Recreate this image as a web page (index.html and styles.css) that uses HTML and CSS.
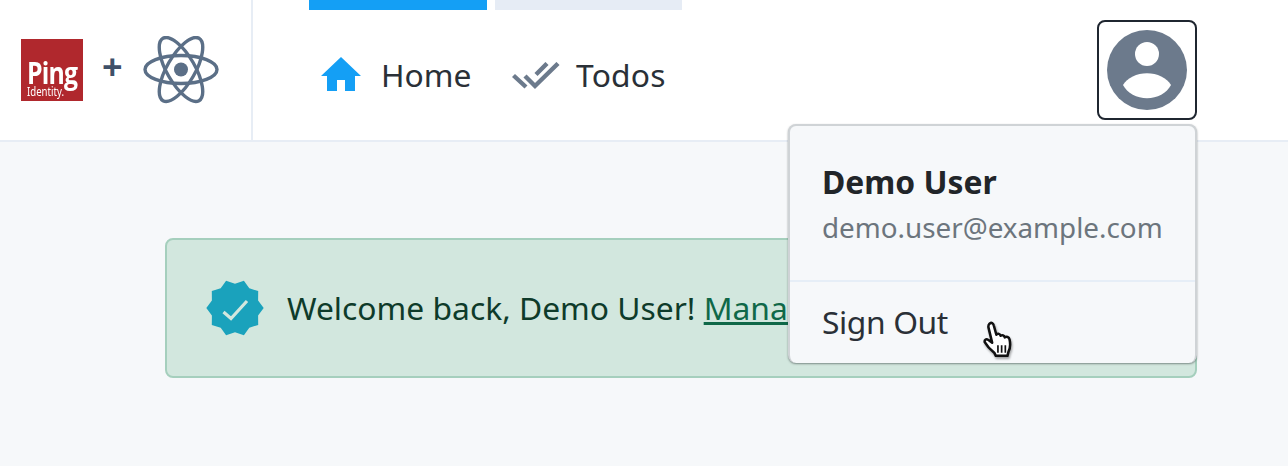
FILE: index.html
```html
<!DOCTYPE html>
<html lang="en">
<head>
<meta charset="utf-8">
<title>Todos</title>
<link rel="stylesheet" href="styles.css">
</head>
<body>
<header class="topbar">
  <div class="brand">
    <div class="ping"><span class="ping-name">Ping</span><span class="ping-sub">Identity.</span></div>
    <span class="plus">+</span>
    <svg class="react" viewBox="0 0 76 68" width="76" height="68">
      <g fill="none" stroke="#5b6f87" stroke-width="3.4">
        <ellipse cx="38" cy="33.5" rx="36" ry="14"/>
        <ellipse cx="38" cy="33.5" rx="36" ry="14" transform="rotate(60 38 33.5)"/>
        <ellipse cx="38" cy="33.5" rx="36" ry="14" transform="rotate(120 38 33.5)"/>
      </g>
      <circle cx="38" cy="33.5" r="7" fill="#5b6f87"/>
    </svg>
  </div>
  <nav class="nav">
    <div class="nav-item">
      <span class="tab tab-active tab-home"></span>
      <div class="link">
        <svg class="home-icon" viewBox="0 0 40 34" width="40" height="34"><path fill="#149ff5" d="M20 0 L40 19 H34 V34 H24 V23 H16 V34 H6 V19 H0 Z"/></svg>
        <span class="label">Home</span>
      </div>
    </div>
    <div class="nav-item">
      <span class="tab tab-todos"></span>
      <div class="link">
        <svg class="check-icon" viewBox="0 0 48 28" width="48" height="28"><path fill="none" stroke="#6c7a8c" stroke-width="4.4" d="M1.500 13.500L14 25M13 14L23 24L46 1.500M24 12.500L35 1.500"/></svg>
        <span class="label">Todos</span>
      </div>
    </div>
  </nav>
  <button class="avatar-btn" type="button" aria-label="Account">
    <svg viewBox="0 0 80 80" width="80" height="80">
      <circle cx="40" cy="40" r="40" fill="#6c7a8c"/>
      <circle cx="40" cy="24" r="12" fill="#fff"/>
      <path fill="#fff" d="M16 55C20 48 30 43.300 40 43.300C50 43.300 60 48 64 55C60 63 50 68.300 40 68.300C30 68.300 20 63 16 55Z"/>
    </svg>
  </button>
</header>
<main class="content">
  <div class="alert">
    <svg class="badge" viewBox="0 0 58 56" width="58" height="56">
      <path fill="#1aa2bc" d="M57.700 28L52.100 20.500L52.200 11.100L43.300 8.300L37.900 0.700L29 3.700L20.100 0.700L14.700 8.300L5.800 11.100L5.900 20.500L0.300 28L5.900 35.500L5.800 44.900L14.700 47.700L20.100 55.300L29 52.300L37.900 55.300L43.300 47.700L52.200 44.900L52.100 35.500Z"/>
      <path fill="none" stroke="#d3e7de" stroke-width="3.200" d="M17.500 32L25 38.500L41 21"/>
    </svg>
    <p class="alert-text">Welcome back, Demo User! <a href="#" class="alert-link">Manage your profile</a></p>
  </div>
</main>
<div class="menu">
  <div class="menu-head">
    <div class="menu-name">Demo User</div>
    <div class="menu-email">demo.user@example.com</div>
  </div>
  <div class="menu-item">Sign Out</div>
  <svg class="cursor" viewBox="0 0 32 36" width="34" height="38">
    <path fill="#fff" stroke="#111" stroke-width="2.400" stroke-linejoin="round" d="M7 2.500C9 1 10.500 2 11 4L13.500 13C15 11.500 17 12 17.500 14C19 13 21 13.500 21.500 15.500C23 14.500 25.500 15 26 17.500C27 22 26.500 26 25 29L24 33H13L11.500 30C9 28 5 24.500 2.500 20C2 18 3.500 16.500 6 18L9.500 20.500L6 6C5.800 4.500 6 3.500 7 2.500Z"/>
    <path stroke="#111" stroke-width="1.600" d="M15 23V30M18.500 23V30M22 23V30"/>
  </svg>
</div>
</body>
</html>
```
FILE: styles.css
```css
* { box-sizing: border-box; }
html, body { margin: 0; height: 100%; }
body {
  width: 1288px;
  height: 466px;
  overflow: hidden;
  background: #f6f8fa;
  font-family: "Noto Sans", "Open Sans", sans-serif;
  color: #2a3037;
  position: relative;
}
.topbar {
  height: 142px;
  background: #fff;
  border-bottom: 2px solid #e7edf5;
  display: flex;
}
.brand {
  width: 253px;
  border-right: 2px solid #e7edf5;
  display: flex;
  align-items: flex-start;
  padding: 39px 0 0 21px;
}
.ping {
  width: 62px;
  height: 62px;
  background: #b0282d;
  color: #fff;
  display: flex;
  flex-direction: column;
  padding: 19px 0 0 6px;
  line-height: 1;
  overflow: hidden;
}
.ping-name {
  font-family: "Open Sans", sans-serif;
  font-weight: 700;
  font-size: 31px;
  letter-spacing: -1px;
  line-height: 28px;
  transform: scaleX(0.8);
  transform-origin: left center;
  white-space: nowrap;
}
.ping-sub {
  font-size: 12px;
  line-height: 11px;
  transform: scaleX(0.8);
  transform-origin: left center;
  white-space: nowrap;
}
.plus {
  font-weight: 700;
  font-size: 36px;
  line-height: 44px;
  color: #3f5068;
  margin: 6px 0 0 19px;
}
.react { margin: -3px 0 0 20px; }
.nav {
  display: flex;
  margin-left: 56px;
  flex: 1;
  gap: 8px;
}
.nav-item { display: flex; flex-direction: column; }
.tab { display: block; height: 10px; }
.tab-home { width: 178px; background: #149ff5; }
.tab-todos { width: 187px; background: #e6ecf5; }
.link {
  display: flex;
  align-items: center;
  margin-top: 44px;
  height: 40px;
}
.home-icon { margin: 0 0 0 12px; }
.check-icon { margin: 4px 0 0 17px; }
.label { font-size: 31.800px; line-height: 40px; margin: 2px 0 0 20px; }
.check-icon + .label { margin-left: 16px; letter-spacing: 0.2px; }
.avatar-btn {
  width: 100px;
  height: 100px;
  margin: 20px 91px 0 0;
  padding: 0;
  background: #fff;
  border: 2px solid #1f2630;
  border-radius: 8px;
  display: flex;
  align-items: center;
  justify-content: center;
}
.content { padding: 96px 91px 0 165px; }
.alert {
  height: 140px;
  background: #d2e7de;
  border: 2px solid #a5cfbd;
  border-radius: 8px;
  display: flex;
  align-items: center;
  padding-left: 39px;
  color: #0e3b2a;
  overflow: hidden;
}
.alert-text { margin: 0 0 0 23px; font-size: 31.800px; line-height: 40px; white-space: nowrap; }
.alert-link { color: #0f6848; }
.menu {
  position: absolute;
  left: 788px;
  top: 124px;
  width: 409px;
  height: 239px;
  background: #f6f8fa;
  border: 2px solid #cfd3d6;
  border-bottom: 0;
  border-radius: 8px;
  box-shadow: 0 1px 2px rgba(40, 50, 50, 0.5);
}
.menu-head {
  height: 156px;
  padding: 36px 32px 0;
  border-bottom: 2px solid #e6eef7;
}
.menu-name { font-size: 31.800px; font-weight: 700; line-height: 40px; color: #212529; }
.menu-email { font-size: 27.800px; line-height: 38px; color: #6c757d; margin-top: 6px; }
.menu-item { font-size: 31.800px; line-height: 40px; letter-spacing: -0.400px; padding: 20px 32px 0; }
.cursor {
  position: absolute;
  left: 192px;
  top: 195px;
  filter: drop-shadow(1px 2px 1px rgba(0,0,0,.35));
}
```
